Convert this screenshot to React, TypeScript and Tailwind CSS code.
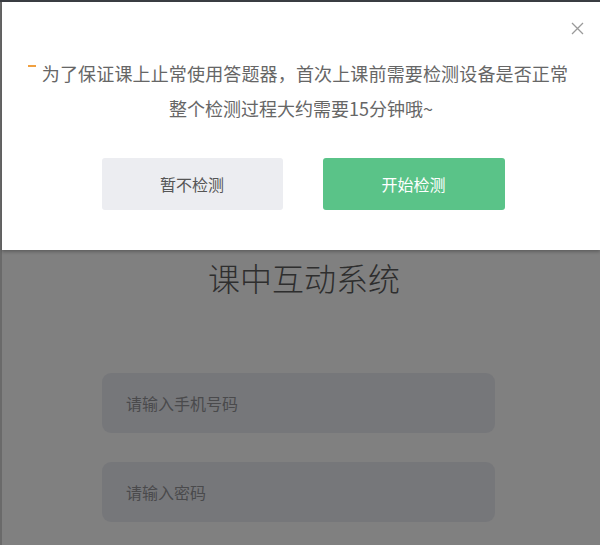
import React from "react";

export default function App() {
  const font = { fontFamily: '"Noto Sans CJK SC", "Noto Sans", sans-serif' };
  return (
    <div className="relative w-[600px] h-[545px] overflow-hidden bg-[#808080]" style={font}>
      {/* top strip of background window */}
      <div className="h-[2px] w-full bg-[#3a3d42]" />
      <div className="flex h-[543px]">
        <div className="w-[2px] bg-[#6a6a6a]" />
        <div className="flex flex-1 flex-col items-center pt-[255px]">
          <div className="pl-[6px] text-[32px] font-light leading-[40px] text-[#2e2e2e]">课中互动系统</div>
          <div className="mr-[5px] mt-[76px] flex h-[60px] w-[393px] items-center rounded-[9px] bg-[#76777a] pl-[24px] text-[16px] text-[#4a4a4c]">
            请输入手机号码
          </div>
          <div className="mr-[5px] mt-[29px] flex h-[60px] w-[393px] items-center rounded-[9px] bg-[#76777a] pl-[24px] text-[16px] text-[#4a4a4c]">
            请输入密码
          </div>
        </div>
      </div>

      {/* modal */}
      <div className="absolute left-[2px] right-0 top-[2px] h-[248px] bg-white shadow-[0_2px_3px_rgba(0,0,0,0.25)]">
        <button className="absolute right-[16px] top-[20px] text-[#9a9a9a]">
          <svg width="13" height="13" viewBox="0 0 13 13" fill="none" stroke="currentColor" strokeWidth="1.3">
            <path d="M1 1L12 12M12 1L1 12" />
          </svg>
        </button>
        <div className="relative flex flex-col items-center pt-[54px] text-[18px] leading-[35px] text-[#666]">
          <span className="absolute left-[26px] top-[63px] h-[2px] w-[8px] bg-[#f0a040]" />
          <div className="pl-[8px] tracking-[0.15px]">为了保证课上止常使用答题器，首次上课前需要检测设备是否正常</div>
          <div>整个检测过程大约需要15分钟哦~</div>
        </div>
        <div className="mt-[32px] flex justify-center gap-[40px] pl-[4px]">
          <button className="h-[52px] w-[181px] rounded-[3px] bg-[#ecedf1] text-[16px] text-[#555]">暂不检测</button>
          <button className="h-[52px] w-[182px] rounded-[3px] bg-[#5ac388] text-[16px] text-white">开始检测</button>
        </div>
      </div>
    </div>
  );
}
